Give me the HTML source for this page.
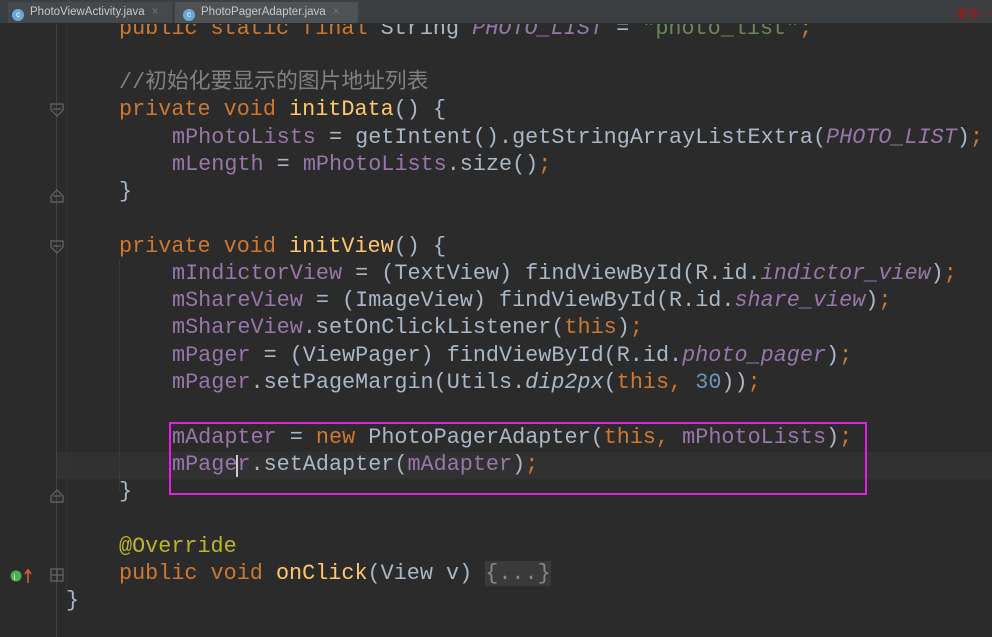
<!DOCTYPE html>
<html><head><meta charset="utf-8"><style>
body{margin:0;width:992px;height:637px;background:#2b2b2b;overflow:hidden;position:relative;font-family:"Liberation Mono","Noto Sans CJK SC",monospace}
.tabs{position:absolute;left:0;top:0;width:992px;height:23px;background:#3c3f41;border-bottom:1px solid #2a2a2a;z-index:5;font-family:"Liberation Sans",sans-serif;font-size:11.5px;color:#c8c8c8}
.tab{position:absolute;top:2px;height:21px;line-height:21px}
.tab i{display:inline-block;width:12px;height:12px;border-radius:50%;background:#6aa8d8;vertical-align:-2px;margin-right:6px;font-style:normal;font-size:8px;color:#fff;text-align:center;line-height:12px}
.x{color:#777;margin-left:7px}
.code{position:absolute;left:0;top:0;width:992px;height:637px}
.l{position:absolute;white-space:pre;font-size:21.8px;line-height:27px;height:27px;color:#a9b7c6}
.k{color:#cc7832}.f{color:#9876aa}.fi{color:#9876aa;font-style:italic}.m{color:#ffc66d}.c{color:#808080}.s{color:#6a8759}.n{color:#6897bb}.a{color:#bbb529}
.gut{position:absolute;left:56px;top:23px;width:1px;height:614px;background:#444}
.ig{position:absolute;width:1px;background:#3a3a3a}
</style></head><body>
<div class="tabs">
<div class="tab" style="left:8px;width:160px;background:#45494b;padding-left:4px"><i>c</i>PhotoViewActivity.java<span class="x">×</span></div>
<div class="tab" style="left:175px;width:175px;background:#4e5254;padding-left:8px"><i>c</i>PhotoPagerAdapter.java<span class="x">×</span></div>
<div style="position:absolute;right:0;top:5px;color:#d00;font-size:12px;font-family:'Noto Serif CJK SC',serif">更多一</div>
</div>
<div style="position:absolute;left:57px;top:452px;width:935px;height:27px;background:#313131"></div>
<div class="gut"></div>
<div class="ig" style="left:119px;top:260px;height:230px"></div>
<div class="ig" style="left:66px;top:23px;height:570px;background:#333"></div>
<div class="code">
<div class="l" style="left:119px;top:15px"><span class="k">public static final </span>String <span class="fi">PHOTO_LIST</span> = <span class="s">"photo_list"</span><span class="k">;</span></div>
<div class="l c" style="left:119px;top:69px;font-family:'Liberation Mono','Noto Sans CJK SC',monospace">//初始化要显示的图片地址列表</div>
<div class="l" style="left:119px;top:96px"><span class="k">private void </span><span class="m">initData</span>() {</div>
<div class="l" style="left:172px;top:124px"><span class="f">mPhotoLists</span> = getIntent().getStringArrayListExtra(<span class="fi">PHOTO_LIST</span>)<span class="k">;</span></div>
<div class="l" style="left:172px;top:151px"><span class="f">mLength</span> = <span class="f">mPhotoLists</span>.size()<span class="k">;</span></div>
<div class="l" style="left:119px;top:178px">}</div>
<div class="l" style="left:119px;top:233px"><span class="k">private void </span><span class="m">initView</span>() {</div>
<div class="l" style="left:172px;top:260px"><span class="f">mIndictorView</span> = (TextView) findViewById(R.id.<span class="fi">indictor_view</span>)<span class="k">;</span></div>
<div class="l" style="left:172px;top:287px"><span class="f">mShareView</span> = (ImageView) findViewById(R.id.<span class="fi">share_view</span>)<span class="k">;</span></div>
<div class="l" style="left:172px;top:314px"><span class="f">mShareView</span>.setOnClickListener(<span class="k">this</span>)<span class="k">;</span></div>
<div class="l" style="left:172px;top:342px"><span class="f">mPager</span> = (ViewPager) findViewById(R.id.<span class="fi">photo_pager</span>)<span class="k">;</span></div>
<div class="l" style="left:172px;top:369px"><span class="f">mPager</span>.setPageMargin(Utils.<i>dip2px</i>(<span class="k">this, </span><span class="n">30</span>))<span class="k">;</span></div>
<div class="l" style="left:172px;top:424px"><span class="f">mAdapter</span> = <span class="k">new </span>PhotoPagerAdapter(<span class="k">this, </span><span class="f">mPhotoLists</span>)<span class="k">;</span></div>
<div class="l" style="left:172px;top:451px"><span class="f">mPager</span>.setAdapter(<span class="f">mAdapter</span>)<span class="k">;</span></div>
<div class="l" style="left:119px;top:478px">}</div>
<div class="l a" style="left:119px;top:533px">@Override</div>
<div class="l" style="left:119px;top:560px"><span class="k">public void </span><span class="m">onClick</span>(View v) <span style="background:#3a3a3a;color:#888">{...}</span></div>
<div class="l" style="left:66px;top:587px">}</div>
</div>
<div style="position:absolute;left:236px;top:455px;width:2px;height:22px;background:#ccc"></div>
<div style="position:absolute;left:169px;top:422px;width:694px;height:69px;border:2px solid #e61ee6"></div>
<svg style="position:absolute;left:0;top:0" width="80" height="637">
<g fill="none" stroke="#666" stroke-width="1.2">
<path d="M51 104h12v6l-6 6l-6-6z M53 109h8"/>
<path d="M51 196l6-6l6 6v6h-12z M53 196h8"/>
<path d="M51 241h12v6l-6 6l-6-6z M53 246h8"/>
<path d="M51 496l6-6l6 6v6h-12z M53 496h8"/>
<path d="M51 569h12v12h-12z M51 575h12 M57 569v12"/>
</g>
<circle cx="16" cy="576" r="5.5" fill="#4caf50"/><text x="13.5" y="580" font-size="8" fill="#fff" font-family="Liberation Sans">i</text>
<path d="M28 583v-12 M25 574l3-4l3 4" stroke="#e0583a" stroke-width="1.6" fill="none"/>
</svg>
</body></html>
